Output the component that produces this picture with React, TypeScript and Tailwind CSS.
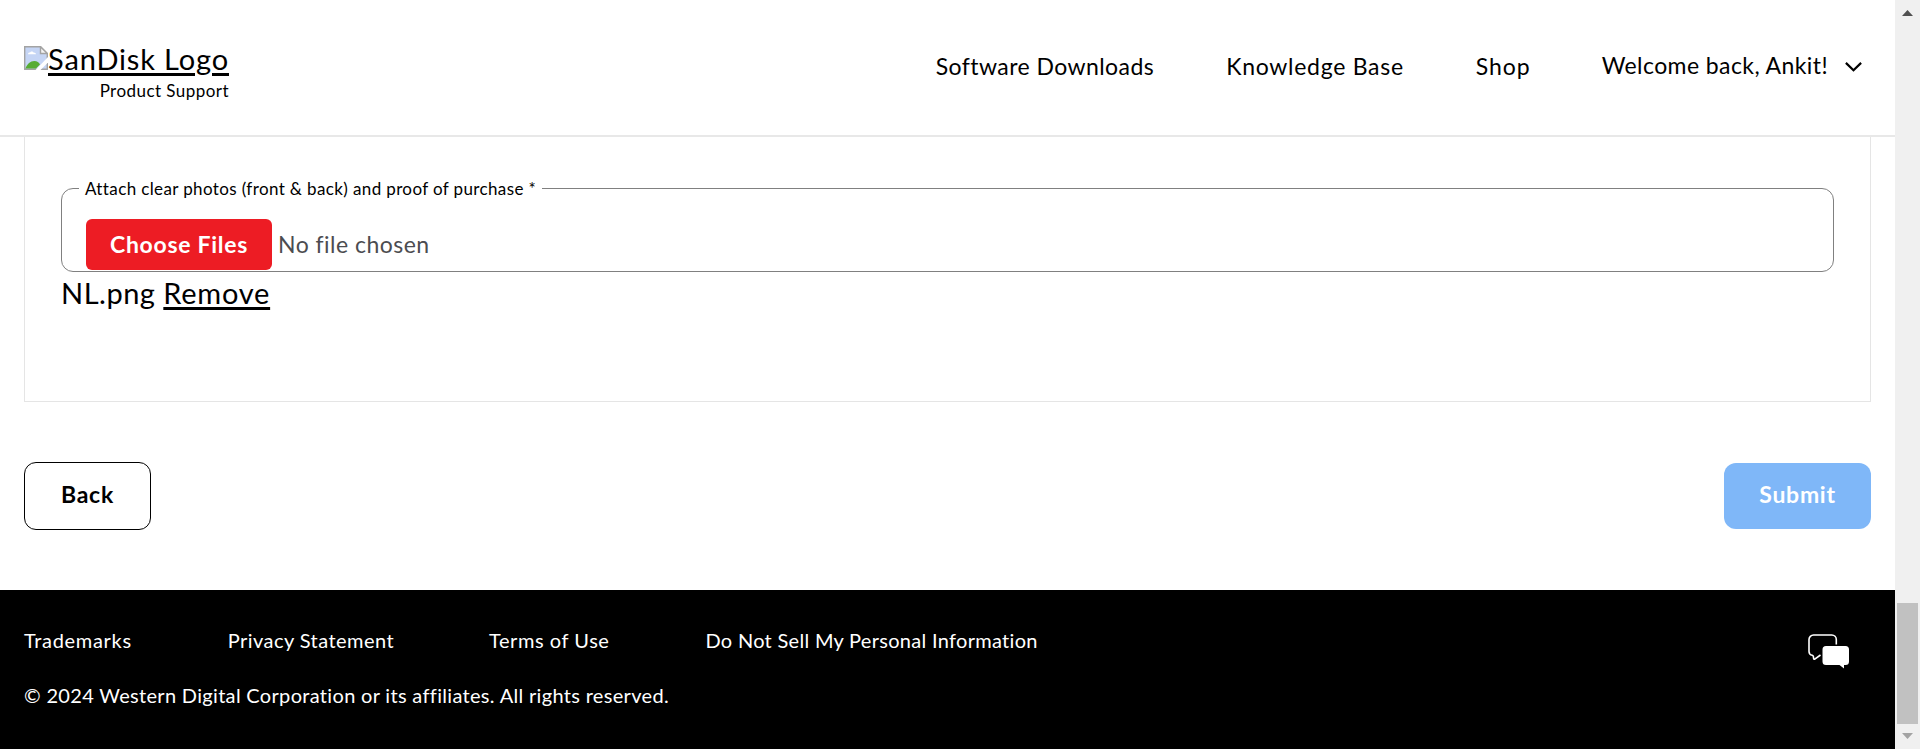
function BrokenImage() {
  return (
    <svg className="block h-6 w-6 shrink-0" viewBox="0 0 24 24">
      <path d="M.7.7h15.800l6.800 6.800v15.800H.7z" fill="#c5d5f5" stroke="#a3a3a3" strokeWidth="1.400" />
      <path d="M4 8.200c0-1.200 1-1.800 2-1.600.5-1.600 3-1.600 3.600 0 1.400-.1 2.400.7 2.300 1.600z" fill="#fff" />
      <path d="M1.400 22.600c1.600-4.600 5-7.600 9-7.600 2.600 0 4.600 1.600 5.600 3.400l-4 4.200z" fill="#57ac35" />
      <path d="M16.500.7v6.800h6.800z" fill="#f4f4f4" stroke="#a3a3a3" strokeWidth="1.400" />
      <path d="M24 11v5.500L16.500 24H11.500z" fill="#fff" />
    </svg>
  );
}

function ChatIcon() {
  return (
    <svg className="block h-[35px] w-[42px]" viewBox="0 0 42 35" fill="none">
      <path
        d="M28.300 10.500V5.500a4.500 4.500 0 0 0-4.500-4.500H5.500A4.500 4.500 0 0 0 1 5.500v12a4 4 0 0 0 3.200 3.800c.7.200 1.100.6 1.200 1.300l.2 1.800c.1.900.8 1.100 1.500.5l5.400-3.900"
        stroke="#fff"
        strokeWidth="1.600"
      />
      <path
        d="M18 12h19.500a3.500 3.500 0 0 1 3.500 3.500v12a3.500 3.500 0 0 1-3.500 3.500H36v3.500L31.500 31H18a3.500 3.500 0 0 1-3.500-3.500v-12A3.500 3.500 0 0 1 18 12z"
        fill="#fff"
      />
    </svg>
  );
}

function Header() {
  return (
    <header className="flex h-[137px] shrink-0 items-start justify-between border-b-2 border-[#e8e8e8] bg-white pr-[33px] pl-6">
      <a href="#" className="flex flex-col items-end pt-[41px]">
        <span className="flex items-start">
          <span className="pt-[5px]">
            <BrokenImage />
          </span>
          <span className="text-[29px] leading-9 tracking-[0.85px] underline decoration-[3px] underline-offset-[3px]">
            SanDisk Logo
          </span>
        </span>
        <span className="mt-[2px] text-[17px] leading-6 tracking-[0.45px]">Product Support</span>
      </a>
      <nav className="flex items-start pt-[50px] text-[23px] leading-8 whitespace-nowrap">
        <a href="#" className="mr-[72px] tracking-[0.44px]">Software Downloads</a>
        <a href="#" className="mr-[72px] tracking-[0.72px]">Knowledge Base</a>
        <a href="#" className="mr-[71px] tracking-[0.95px]">Shop</a>
        <button type="button" className="-mt-px flex items-center tracking-[0.41px]">
          Welcome back, Ankit!
          <svg className="mt-1 ml-[17px] h-[10px] w-[17px]" viewBox="0 0 17 10" fill="none">
            <path d="M.9.900l7.600 7.400L16.100.900" stroke="#000" strokeWidth="2.200" />
          </svg>
        </button>
      </nav>
    </header>
  );
}

function Attachments() {
  return (
    <section className="mx-6 h-[265px] shrink-0 border border-t-0 border-[#e5e5e5] px-9 pt-[41px]">
      <fieldset className="h-[94px] rounded-[12px] border border-[#808080] pl-[17px]">
        <legend className="h-5 px-1.5 text-[17px] leading-[22px] tracking-[0.375px]">
          Attach clear photos (front &amp; back) and proof of purchase *
        </legend>
        <div className="flex items-center pt-[21px] pl-[7px] text-[23px]">
          <button
            type="button"
            className="h-[51px] w-[186px] rounded-[6px] bg-[#ed1c24] pb-px font-bold tracking-[0.7px] text-white"
          >
            Choose Files
          </button>
          <span className="ml-1.5 pb-px tracking-[0.48px] text-[#4c4c50]">No file chosen</span>
        </div>
      </fieldset>
      <p className="pt-[3px] text-[29px] leading-9">
        <span className="tracking-[0.5px]">NL.png </span>
        <a href="#" className="tracking-[0.75px] underline decoration-[3px] underline-offset-[3px]">Remove</a>
      </p>
    </section>
  );
}

function Footer() {
  return (
    <footer className="flex grow items-start justify-between bg-black pt-[36px] pr-[45px] pl-6 text-[20px] leading-7 whitespace-nowrap text-white">
      <div>
        <div className="flex">
          <a href="#" className="mr-24 tracking-[0.68px]">Trademarks</a>
          <a href="#" className="mr-[95px] tracking-[0.45px]">Privacy Statement</a>
          <a href="#" className="mr-[96px] tracking-[0.55px]">Terms of Use</a>
          <a href="#" className="tracking-[0.3px]">Do Not Sell My Personal Information</a>
        </div>
        <p className="mt-[27px] tracking-[0.32px]">
          © 2024 Western Digital Corporation or its affiliates. All rights reserved.
        </p>
      </div>
      <button type="button" className="mt-[8px]" aria-label="Chat">
        <ChatIcon />
      </button>
    </footer>
  );
}

function Scrollbar() {
  return (
    <div className="flex w-[25px] shrink-0 flex-col items-center bg-[#f0f0f0] pt-[10px] pb-[10px]">
      <svg className="h-[6px] w-[11px]" viewBox="0 0 11 6">
        <path d="M0 6L5.500 0L11 6z" fill="#505050" />
      </svg>
      <div className="mt-auto mb-[9px] h-[121px] w-[21px] bg-[#c1c1c1]" />
      <svg className="h-[6px] w-[11px]" viewBox="0 0 11 6">
        <path d="M0 0L5.500 6L11 0z" fill="#a3a3a3" />
      </svg>
    </div>
  );
}

export default function App() {
  return (
    <div className="flex h-[749px] overflow-hidden bg-white font-[Lato,sans-serif] text-black">
      <div className="flex min-w-0 grow flex-col">
        <Header />
        <Attachments />
        <div className="flex shrink-0 items-center justify-between px-6 py-[60px] text-[23px] font-bold">
          <button type="button" className="h-[68px] w-[127px] rounded-[12px] border border-black pb-[3px] tracking-[0.7px]">
            Back
          </button>
          <button
            type="button"
            className="h-[66px] w-[147px] rounded-[12px] bg-[#7fb7f8] pb-[3px] tracking-[0.7px] text-white"
          >
            Submit
          </button>
        </div>
        <Footer />
      </div>
      <Scrollbar />
    </div>
  );
}
